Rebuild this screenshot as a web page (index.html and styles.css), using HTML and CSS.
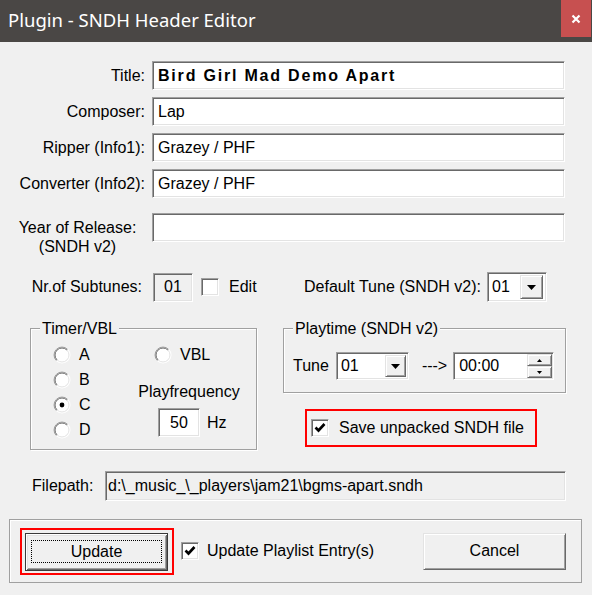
FILE: index.html
```html
<!DOCTYPE html>
<html>
<head>
<meta charset="utf-8">
<link rel="stylesheet" href="styles.css">
</head>
<body>
<div class="window">
  <div class="titlebar">
    <span class="title">Plugin - SNDH Header Editor</span>
    <div class="close"><svg width="10" height="10" viewBox="0 0 10 10"><path d="M1.5 1.5L8.5 8.5M8.5 1.5L1.5 8.5" stroke="#fff" stroke-width="2.2" fill="none"/></svg></div>
  </div>

  <div class="fields">
    <span class="lbl">Title:</span><div class="edit sunken bold">Bird Girl Mad Demo Apart</div>
    <span class="lbl">Composer:</span><div class="edit sunken">Lap</div>
    <span class="lbl">Ripper (Info1):</span><div class="edit sunken">Grazey / PHF</div>
    <span class="lbl">Converter (Info2):</span><div class="edit sunken">Grazey / PHF</div>
  </div>
  <div class="fields year">
    <span class="lbl two">Year of Release:<br>(SNDH v2)</span><div class="edit sunken"></div>
  </div>

  <div class="sub-row">
    <span class="sub-label">Nr.of Subtunes:</span>
    <div class="ro-box sunken">01</div>
    <span class="check sunken"></span>
    <span class="edit-lbl">Edit</span>
    <span class="default-lbl">Default Tune (SNDH v2):</span>
    <div class="combo sunken default-combo">
      <span class="combo-text">01</span>
      <span class="combo-btn raised"><svg width="9" height="5" viewBox="0 0 9 5"><path d="M0 0H9L4.5 5Z" fill="#000"/></svg></span>
    </div>
  </div>

  <div class="groups">
    <fieldset class="group timer">
      <legend>Timer/VBL</legend>
      <div class="timer-body">
        <div class="radios">
          <div class="radio-row"><svg class="radio" width="18" height="18" viewBox="0 0 18 18"><circle cx="9" cy="9" r="8.5" fill="#fff"/><path d="M3.34 14.66A8 8 0 0 1 14.66 3.34" fill="none" stroke="#a0a0a0"/><path d="M4.05 13.95A7 7 0 0 1 13.95 4.05" fill="none" stroke="#696969"/><path d="M13.95 4.05A7 7 0 0 1 4.05 13.95" fill="none" stroke="#e3e3e3"/></svg><span>A</span></div>
          <div class="radio-row"><svg class="radio" width="18" height="18" viewBox="0 0 18 18"><circle cx="9" cy="9" r="8.5" fill="#fff"/><path d="M3.34 14.66A8 8 0 0 1 14.66 3.34" fill="none" stroke="#a0a0a0"/><path d="M4.05 13.95A7 7 0 0 1 13.95 4.05" fill="none" stroke="#696969"/><path d="M13.95 4.05A7 7 0 0 1 4.05 13.95" fill="none" stroke="#e3e3e3"/></svg><span>B</span></div>
          <div class="radio-row"><svg class="radio" width="18" height="18" viewBox="0 0 18 18"><circle cx="9" cy="9" r="8.5" fill="#fff"/><path d="M3.34 14.66A8 8 0 0 1 14.66 3.34" fill="none" stroke="#a0a0a0"/><path d="M4.05 13.95A7 7 0 0 1 13.95 4.05" fill="none" stroke="#696969"/><path d="M13.95 4.05A7 7 0 0 1 4.05 13.95" fill="none" stroke="#e3e3e3"/><circle cx="9" cy="9" r="2.4" fill="#000"/></svg><span>C</span></div>
          <div class="radio-row"><svg class="radio" width="18" height="18" viewBox="0 0 18 18"><circle cx="9" cy="9" r="8.5" fill="#fff"/><path d="M3.34 14.66A8 8 0 0 1 14.66 3.34" fill="none" stroke="#a0a0a0"/><path d="M4.05 13.95A7 7 0 0 1 13.95 4.05" fill="none" stroke="#696969"/><path d="M13.95 4.05A7 7 0 0 1 4.05 13.95" fill="none" stroke="#e3e3e3"/></svg><span>D</span></div>
        </div>
        <div class="timer-right">
          <div class="radio-row vbl"><svg class="radio" width="18" height="18" viewBox="0 0 18 18"><circle cx="9" cy="9" r="8.5" fill="#fff"/><path d="M3.34 14.66A8 8 0 0 1 14.66 3.34" fill="none" stroke="#a0a0a0"/><path d="M4.05 13.95A7 7 0 0 1 13.95 4.05" fill="none" stroke="#696969"/><path d="M13.95 4.05A7 7 0 0 1 4.05 13.95" fill="none" stroke="#e3e3e3"/></svg><span>VBL</span></div>
          <div class="pf">Playfrequency</div>
          <div class="freq">
            <div class="freq-box sunken">50</div>
            <span class="hz">Hz</span>
          </div>
        </div>
      </div>
    </fieldset>

    <div class="right-col">
      <fieldset class="group playtime">
        <legend>Playtime (SNDH v2)</legend>
        <div class="pt-body">
          <span>Tune</span>
          <div class="combo sunken tune-combo">
            <span class="combo-text">01</span>
            <span class="combo-btn raised"><svg width="9" height="5" viewBox="0 0 9 5"><path d="M0 0H9L4.5 5Z" fill="#000"/></svg></span>
          </div>
          <span class="arrow-txt">---&gt;</span>
          <div class="time sunken">
            <span class="combo-text">00:00</span>
            <span class="spin">
              <span class="spin-btn raised"><svg width="5" height="3" viewBox="0 0 5 3"><path d="M0 3H5L2.5 0Z" fill="#000"/></svg></span>
              <span class="spin-btn raised"><svg width="5" height="3" viewBox="0 0 5 3"><path d="M0 0H5L2.5 3Z" fill="#000"/></svg></span>
            </span>
          </div>
        </div>
      </fieldset>
      <div class="save-hl">
        <span class="check sunken"><svg width="14" height="14" viewBox="0 0 14 14"><path d="M2.5 6.5L5.5 9.5L11.5 3" stroke="#000" stroke-width="2.6" fill="none"/></svg></span>
        <span class="save-lbl">Save unpacked SNDH file</span>
      </div>
    </div>
  </div>

  <div class="path-row">
    <span>Filepath:</span>
    <div class="path-box sunken">d:\_music_\_players\jam21\bgms-apart.sndh</div>
  </div>

  <div class="bottom-grp">
    <div class="red-hl">
      <div class="btn btn-default"><span class="focus">Update</span></div>
    </div>
    <span class="check sunken"><svg width="14" height="14" viewBox="0 0 14 14"><path d="M2.5 6.5L5.5 9.5L11.5 3" stroke="#000" stroke-width="2.6" fill="none"/></svg></span>
    <span class="upl">Update Playlist Entry(s)</span>
    <div class="btn raised cancel">Cancel</div>
  </div>
</div>
</body>
</html>
```
FILE: styles.css
```css
* { box-sizing: border-box; }
body { margin: 0; background: #f0f0f0; }

.window {
  width: 592px;
  height: 595px;
  background: #f0f0f0;
  font-family: "Liberation Sans", Arial, sans-serif;
  font-size: 16px;
  color: #000;
  overflow: hidden;
}

.titlebar {
  height: 42px;
  background: #4a4745;
  display: flex;
  justify-content: space-between;
  align-items: flex-start;
}
.title {
  font-family: "Noto Sans", sans-serif;
  font-size: 18.5px;
  color: #fff;
  padding-left: 8px;
  line-height: 40px;
}
.close {
  width: 30px;
  height: 37px;
  background: #c75050;
  margin-right: 1px;
  display: flex;
  align-items: center;
  justify-content: center;
}

.sunken {
  border: 1px solid;
  border-color: #a0a0a0 #fff #fff #a0a0a0;
  box-shadow: inset 1px 1px 0 #696969, inset -1px -1px 0 #e3e3e3;
}
.raised {
  background: #f0f0f0;
  border: 1px solid;
  border-color: #e3e3e3 #696969 #696969 #e3e3e3;
  box-shadow: inset 1px 1px 0 #fff, inset -1px -1px 0 #a0a0a0;
}

.fields {
  display: grid;
  grid-template-columns: 145px 413px;
  column-gap: 7px;
  row-gap: 7px;
  grid-auto-rows: 29px;
  align-items: center;
  margin-top: 19px;
}
.fields.year { margin-top: 15px; }
.lbl { text-align: right; white-space: nowrap; }
.lbl.two {
  text-align: center;
  padding-left: 10px;
  align-self: start;
  line-height: 19px;
  padding-top: 5px;
}
.edit {
  height: 29px;
  background: #fff;
  padding-left: 5px;
  display: flex;
  align-items: center;
  white-space: nowrap;
}
.bold { font-weight: bold; letter-spacing: 1.8px; }

.sub-row {
  display: flex;
  align-items: center;
  height: 30px;
  margin-top: 30px;
}
.sub-label { width: 145px; text-align: right; padding-right: 3px; white-space: nowrap; }
.ro-box {
  width: 40px;
  height: 29px;
  margin-left: 8px;
  background: #f0f0f0;
  display: flex;
  align-items: center;
  justify-content: center;
}
.check {
  width: 18px;
  height: 18px;
  background: #fff;
  display: inline-flex;
  align-items: center;
  justify-content: center;
  flex: none;
}
.sub-row .check { margin-left: 8px; }
.edit-lbl { margin-left: 10px; }
.default-lbl { margin-left: auto; margin-right: 6px; white-space: nowrap; }

.combo {
  display: flex;
  background: #fff;
}
.default-combo { width: 60px; height: 30px; margin-right: 45px; }
.combo-text { flex: 1; padding-left: 4px; display: flex; align-items: center; }
.combo-btn {
  width: 23px;
  margin: 2px 3px 2px 0;
  display: flex;
  align-items: center;
  justify-content: center;
}

.groups {
  display: flex;
  align-items: flex-start;
  margin-top: 17px;
}
fieldset.group {
  margin: 0;
  padding: 0;
  min-width: 0;
  border: 1px solid #a0a0a0;
  box-shadow: inset 1px 1px 0 #fff, 1px 1px 0 #fff;
}
legend {
  margin-left: 9px;
  padding: 0 2px;
  line-height: 19px;
  background: #f0f0f0;
}
fieldset.timer { margin-left: 30px; width: 227px; }
.timer-body { display: flex; padding: 4px 0 7px 22px; }
.radios { width: 85px; display: flex; flex-direction: column; }
.radio-row { height: 25px; display: flex; align-items: center; }
.radio { margin-right: 8px; flex: none; }
.timer-right { width: 102px; display: flex; flex-direction: column; }
.vbl { padding-left: 16px; }
.pf { margin-top: 15px; line-height: 19px; text-align: center; white-space: nowrap; }
.freq { display: flex; align-items: center; margin-top: 7px; padding-left: 20px; }
.freq-box {
  width: 42px;
  height: 29px;
  background: #fff;
  display: flex;
  align-items: center;
  justify-content: center;
}
.hz { margin-left: 7px; }

.right-col { margin-left: 26px; display: flex; flex-direction: column; }
fieldset.playtime { width: 283px; }
.pt-body { display: flex; align-items: center; padding: 14px 0 12px 9px; }
.tune-combo { width: 73px; height: 28px; margin-left: 7px; }
.tune-combo .combo-btn { width: 21px; margin: 2px 2px 2px 0; }
.arrow-txt { margin-left: 13px; }
.time {
  width: 101px;
  height: 28px;
  margin-left: 6px;
  display: flex;
  background: #fff;
}
.time .combo-text { padding-left: 5px; }
.spin {
  width: 25px;
  margin: 1px 1px 1px 0;
  display: flex;
  flex-direction: column;
}
.spin-btn { flex: 1; display: flex; align-items: center; justify-content: center; }

.save-hl {
  margin: 16px 0 0 22px;
  width: 232px;
  height: 38px;
  border: 2px solid #f00;
  display: flex;
  align-items: center;
  padding-left: 4px;
}
.save-lbl { margin-left: 10px; white-space: nowrap; }

.path-row {
  display: flex;
  align-items: center;
  height: 30px;
  margin-top: 21px;
  padding-left: 32px;
}
.path-box {
  margin-left: auto;
  margin-right: 26px;
  width: 461px;
  height: 30px;
  background: #f0f0f0;
  padding-left: 2px;
  display: flex;
  align-items: center;
  white-space: nowrap;
}

.bottom-grp {
  margin: 18px 0 0 9px;
  width: 573px;
  height: 64px;
  border: 1px solid #a0a0a0;
  box-shadow: inset 1px 1px 0 #fff;
  display: flex;
  align-items: center;
}
.red-hl {
  margin-left: 10px;
  width: 154px;
  height: 47px;
  border: 2px solid #f00;
  padding: 3px 4px 2px 3px;
}
.btn {
  width: 143px;
  height: 38px;
  display: flex;
  align-items: center;
  justify-content: center;
  flex: none;
}
.btn-default {
  background: #f0f0f0;
  border: 1px solid #3a3a3a;
  box-shadow: inset 1px 1px 0 #fff, inset -1px -1px 0 #696969, inset 2px 2px 0 #e3e3e3, inset -2px -2px 0 #a0a0a0;
}
.focus {
  width: 131px;
  height: 23px;
  border: 1px dotted #000;
  display: flex;
  align-items: center;
  justify-content: center;
}
.bottom-grp .check { margin-left: 7px; }
.upl { margin-left: 8px; white-space: nowrap; }
.cancel { margin-left: auto; margin-right: 15px; height: 37px; }
```
